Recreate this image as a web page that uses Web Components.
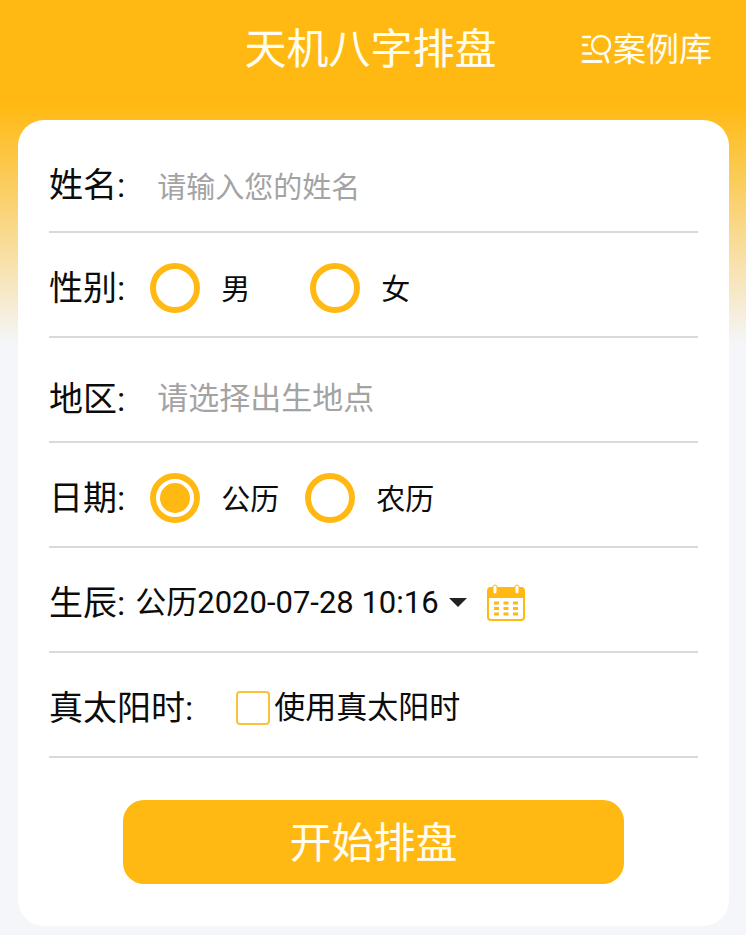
<!DOCTYPE html>
<html lang="zh-CN">
<head>
<meta charset="utf-8">
<meta name="viewport" content="width=device-width, initial-scale=1">
<title>天机八字排盘</title>
<style>
  body {
    --brand: #ffb912;
    --page: #f4f6fa;
    margin: 0;
    min-height: 100vh;
    background: var(--page) linear-gradient(var(--brand) 105px, var(--page) 345px) no-repeat;
    color: #0c0c0c;
    font-family: Roboto, "Noto Sans CJK SC", sans-serif;
  }
</style>
</head>
<body>
<page-header>
  天机八字排盘
  <case-link slot="action" href="#cases">案例库</case-link>
</page-header>
<form-card>
  <text-row label="姓名" placeholder="请输入您的姓名"></text-row>
  <radio-row label="性别" name="gender" options="男,女" class="wide"></radio-row>
  <text-row label="地区" placeholder="请选择出生地点" class="large"></text-row>
  <radio-row label="日期" name="calendar" options="公历,农历" value="公历"></radio-row>
  <birth-row label="生辰" value="公历2020-07-28 10:16"></birth-row>
  <check-row label="真太阳时" text="使用真太阳时"></check-row>
  <submit-button slot="footer">开始排盘</submit-button>
</form-card>

<script>
class PageHeader extends HTMLElement {
  connectedCallback() {
    this.attachShadow({ mode: 'open' });
    this.shadowRoot.innerHTML = `
      <style>
        :host { display: block; color: #fffdf2; }
        header {
          display: grid;
          grid-template-columns: 1fr auto 1fr;
          align-items: center;
          height: 100px;
          margin-bottom: 20px;
          padding: 0 34px 0 29px;
        }
        h1 {
          grid-column: 2;
          margin: 0;
          font-size: 42px;
          font-weight: 400;
          line-height: 60px;
          white-space: nowrap;
        }
        slot[name="action"] { display: flex; justify-content: flex-end; }
      </style>
      <header>
        <h1><slot></slot></h1>
        <slot name="action"></slot>
      </header>
    `;
  }
}
customElements.define('page-header', PageHeader);

class CaseLink extends HTMLElement {
  connectedCallback() {
    this.attachShadow({ mode: 'open' });
    this.shadowRoot.innerHTML = `
      <style>
        :host { display: block; }
        a {
          display: flex;
          align-items: center;
          gap: 2px;
          color: inherit;
          font-size: 33px;
          line-height: 48px;
          text-decoration: none;
          white-space: nowrap;
        }
        svg { width: 30px; height: 32px; flex: none; }
      </style>
      <a href="${this.getAttribute('href')}">
        <svg viewBox="0 0 30 32" fill="none" stroke="currentColor" stroke-width="2.400" stroke-linecap="round" aria-hidden="true">
          <path d="M2 3h7M2 11h4M2 19.500h8" />
          <path d="M2 27.500h18" stroke-width="3" />
          <circle cx="20" cy="11" r="9" />
          <path d="M24.500 21l2.500 7" stroke-width="2.800" />
        </svg>
        <slot></slot>
      </a>
    `;
  }
}
customElements.define('case-link', CaseLink);

class FormCard extends HTMLElement {
  connectedCallback() {
    this.attachShadow({ mode: 'open' });
    this.shadowRoot.innerHTML = `
      <style>
        :host { display: block; padding: 0 17px 10px 18px; }
        main {
          background: #fff;
          border-radius: 26px;
          padding: 8px 31px 42px;
        }
        .footer { padding: 42px 74px 0; }
      </style>
      <main>
        <slot></slot>
        <div class="footer"><slot name="footer"></slot></div>
      </main>
    `;
  }
}
customElements.define('form-card', FormCard);

// Label on the left, control on the right, rule underneath.
class FormRow extends HTMLElement {
  connectedCallback() {
    this.attachShadow({ mode: 'open' });
    this.shadowRoot.innerHTML = `
      <style>
        :host { display: block; }
        .row {
          display: flex;
          align-items: center;
          box-sizing: border-box;
          min-height: 105px;
          padding-top: 6px;
          border-bottom: 2px solid #d9d9d9;
        }
        .label {
          flex: none;
          font-size: 34px;
          line-height: 50px;
          white-space: nowrap;
        }
        input, select, button { font-family: inherit; color: inherit; margin: 0; }
        ${this.styles()}
      </style>
      <div class="row">${this.control(this.getAttribute('label') + ':')}</div>
    `;
  }
}

class TextRow extends FormRow {
  styles() {
    return `
      .row { gap: 32px; padding-top: 10px; }
      input {
        flex: 1;
        min-width: 0;
        padding: 6px 0 0;
        border: 0;
        outline: 0;
        background: none;
        font-size: 29px;
        line-height: 44px;
      }
      :host(.large) .row { padding-top: 18px; }
      :host(.large) input { padding: 0; font-size: 31px; }
      input::placeholder { color: #a3a3a3; opacity: 1; }
    `;
  }
  control(label) {
    return `
      <label class="label" for="field">${label}</label>
      <input id="field" type="text" placeholder="${this.getAttribute('placeholder')}">
    `;
  }
}
customElements.define('text-row', TextRow);

class RadioRow extends FormRow {
  styles() {
    return `
      .row { gap: 25px; }
      .options { display: flex; gap: 26px; }
      :host(.wide) .options { gap: 60px; }
      .option {
        display: flex;
        align-items: center;
        gap: 21px;
        font-size: 29px;
        line-height: 44px;
      }
      .option span { padding-top: 4px; }
      input {
        appearance: none;
        box-sizing: border-box;
        width: 50px;
        height: 50px;
        border: 6px solid var(--brand);
        border-radius: 50%;
        padding: 4px;
        background: #fff;
      }
      input:checked { background: var(--brand) content-box; }
    `;
  }
  control(label) {
    const name = this.getAttribute('name');
    const options = this.getAttribute('options').split(',').map(option => `
      <label class="option">
        <input type="radio" name="${name}" value="${option}" ${option === this.getAttribute('value') ? 'checked' : ''}>
        <span>${option}</span>
      </label>
    `).join('');
    return `
      <span class="label" id="label">${label}</span>
      <div class="options" role="radiogroup" aria-labelledby="label">${options}</div>
    `;
  }
}
customElements.define('radio-row', RadioRow);

class BirthRow extends FormRow {
  styles() {
    return `
      .row { gap: 10px; }
      .picker { display: grid; align-items: center; }
      .picker > * { grid-area: 1 / 1; }
      select {
        appearance: none;
        border: 0;
        padding: 0 28px 0 0;
        background: none;
        font-size: 31px;
        line-height: 46px;
      }
      .caret {
        justify-self: end;
        width: 18px;
        height: 9px;
        fill: #222;
        pointer-events: none;
      }
      button {
        display: flex;
        margin-left: 10px;
        padding: 0;
        border: 0;
        background: none;
        color: var(--brand);
      }
      button svg { width: 38px; height: 38px; }
    `;
  }
  control(label) {
    return `
      <label class="label" for="birth">${label}</label>
      <div class="picker">
        <select id="birth"><option>${this.getAttribute('value')}</option></select>
        <svg class="caret" viewBox="0 0 18 9" aria-hidden="true"><path d="M0 0h18L9 9z" /></svg>
      </div>
      <button type="button" aria-label="选择日期">
        <svg viewBox="0 0 38 38" aria-hidden="true">
          <rect x="1" y="4" width="36" height="32" rx="3" fill="#fff" stroke="currentColor" stroke-width="2" />
          <path d="M1 14V6a3 3 0 0 1 3-3h30a3 3 0 0 1 3 3v8z" fill="currentColor" />
          <g fill="#fff" stroke="currentColor" stroke-width="1">
            <rect x="6" y="1" width="4" height="9" rx="2" />
            <rect x="28" y="1" width="4" height="9" rx="2" />
          </g>
          <path d="M7 19h5M16.500 19h5M26 19h5M7 24.500h5M16.500 24.500h5M26 24.500h5M7 30h5M16.500 30h5M26 30h5" stroke="currentColor" stroke-width="3" />
        </svg>
      </button>
    `;
  }
}
customElements.define('birth-row', BirthRow);

class CheckRow extends FormRow {
  styles() {
    return `
      .row { gap: 43px; }
      .option {
        display: flex;
        align-items: center;
        gap: 4px;
        font-size: 31px;
        line-height: 46px;
      }
      input {
        appearance: none;
        box-sizing: border-box;
        width: 34px;
        height: 34px;
        border: 2px solid #fbc13c;
        border-radius: 4px;
      }
      input:checked { background: var(--brand); }
    `;
  }
  control(label) {
    return `
      <span class="label">${label}</span>
      <label class="option"><input type="checkbox">${this.getAttribute('text')}</label>
    `;
  }
}
customElements.define('check-row', CheckRow);

class SubmitButton extends HTMLElement {
  connectedCallback() {
    this.attachShadow({ mode: 'open' });
    this.shadowRoot.innerHTML = `
      <style>
        :host { display: block; }
        button {
          display: block;
          width: 100%;
          height: 84px;
          border: 0;
          border-radius: 21px;
          padding: 4px 0 0;
          background: var(--brand);
          color: #fffdf2;
          font-family: inherit;
          font-size: 42px;
          line-height: 60px;
        }
      </style>
      <button type="button"><slot></slot></button>
    `;
  }
}
customElements.define('submit-button', SubmitButton);
</script>
</body>
</html>
